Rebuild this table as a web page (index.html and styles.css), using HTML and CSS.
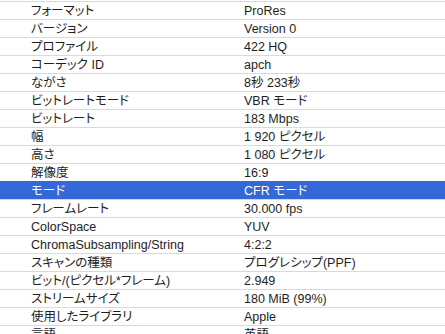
FILE: index.html
```html
<!DOCTYPE html>
<html lang="ja">
<head>
<meta charset="utf-8">
<link rel="stylesheet" href="styles.css">
</head>
<body>
<div class="list">
  <div class="row"><span class="k">フォーマット</span><span class="v">ProRes</span></div>
  <div class="row"><span class="k">バージョン</span><span class="v">Version 0</span></div>
  <div class="row"><span class="k">プロファイル</span><span class="v">422 HQ</span></div>
  <div class="row"><span class="k">コーデック ID</span><span class="v">apch</span></div>
  <div class="row"><span class="k">ながさ</span><span class="v">8秒 233秒</span></div>
  <div class="row"><span class="k">ビットレートモード</span><span class="v">VBR モード</span></div>
  <div class="row"><span class="k">ビットレート</span><span class="v">183 Mbps</span></div>
  <div class="row"><span class="k">幅</span><span class="v">1 920 ピクセル</span></div>
  <div class="row"><span class="k">高さ</span><span class="v">1 080 ピクセル</span></div>
  <div class="row"><span class="k">解像度</span><span class="v">16:9</span></div>
  <div class="row sel"><span class="k">モード</span><span class="v">CFR モード</span></div>
  <div class="row"><span class="k">フレームレート</span><span class="v">30.000 fps</span></div>
  <div class="row"><span class="k">ColorSpace</span><span class="v">YUV</span></div>
  <div class="row"><span class="k">ChromaSubsampling/String</span><span class="v">4:2:2</span></div>
  <div class="row"><span class="k">スキャンの種類</span><span class="v">プログレシップ(PPF)</span></div>
  <div class="row"><span class="k">ビット/(ピクセル*フレーム)</span><span class="v">2.949</span></div>
  <div class="row"><span class="k">ストリームサイズ</span><span class="v">180 MiB (99%)</span></div>
  <div class="row"><span class="k">使用したライブラリ</span><span class="v">Apple</span></div>
  <div class="row"><span class="k">言語</span><span class="v">英語</span></div>
</div>
</body>
</html>
```
FILE: styles.css
```css
html, body {
  margin: 0;
  padding: 0;
  background: #ffffff;
  overflow: hidden;
}
body {
  font-family: "Liberation Sans", "Noto Sans CJK JP", sans-serif;
  font-size: 12.5px;
  font-feature-settings: "palt";
  color: #1e1e1e;
}
.list {
  display: flex;
  flex-direction: column;
  padding-top: 1px;
}
.row {
  display: flex;
  align-items: center;
  height: 16px;
  padding-top: 1px;
  border-top: 1px solid #d9d9d9;
  line-height: 16px;
  white-space: nowrap;
}
.k {
  width: 213px;
  padding-left: 31px;
  flex: none;
}
.v {
  flex: 1;
}
.sel {
  background: #3468d6;
  border-top-color: #3468d6;
  color: #ffffff;
}
```
